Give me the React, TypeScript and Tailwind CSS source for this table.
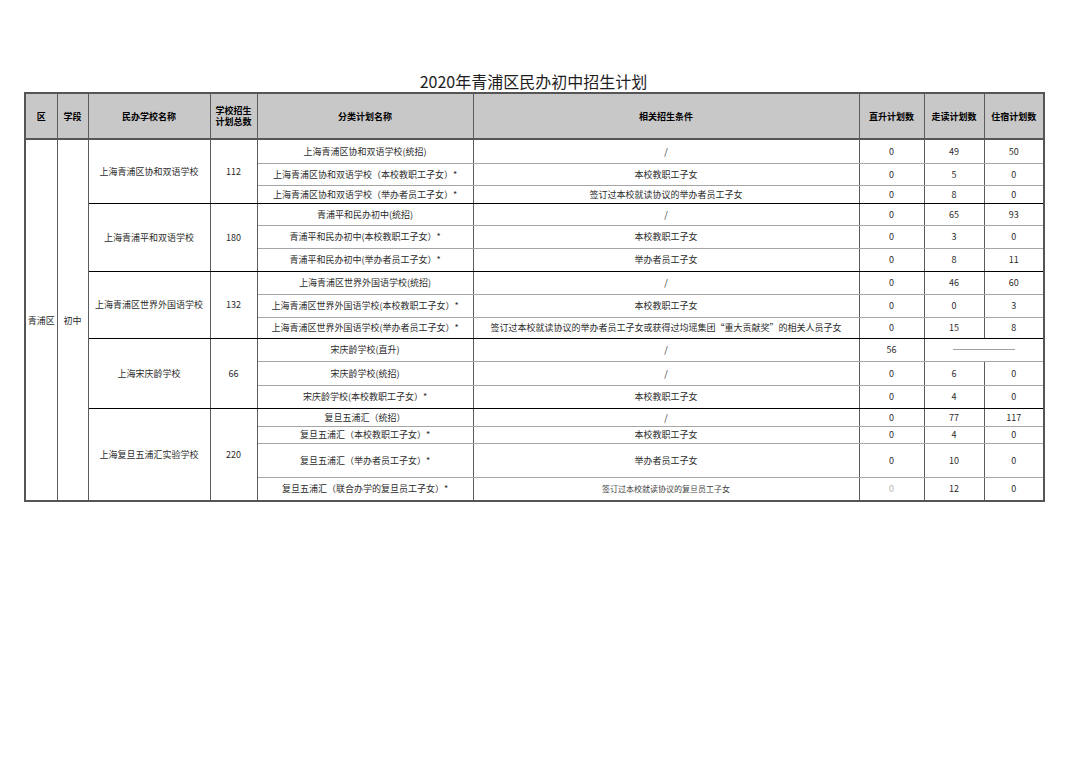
type Row = {
  name: string
  cond: string
  zs: string
  zd: string
  zz: string
  h: string
  merged?: boolean
  faint?: boolean
}

type Group = { school: string; total: string; rows: Row[] }

const groups: Group[] = [
  {
    school: '上海青浦区协和双语学校',
    total: '112',
    rows: [
      { name: '上海青浦区协和双语学校(统招)', cond: '/', zs: '0', zd: '49', zz: '50', h: 'h-[24px]' },
      { name: '上海青浦区协和双语学校（本校教职工子女）*', cond: '本校教职工子女', zs: '0', zd: '5', zz: '0', h: 'h-[22px]' },
      { name: '上海青浦区协和双语学校（举办者员工子女）*', cond: '签订过本校就读协议的举办者员工子女', zs: '0', zd: '8', zz: '0', h: 'h-[18px]' },
    ],
  },
  {
    school: '上海青浦平和双语学校',
    total: '180',
    rows: [
      { name: '青浦平和民办初中(统招)', cond: '/', zs: '0', zd: '65', zz: '93', h: 'h-[22px]' },
      { name: '青浦平和民办初中(本校教职工子女）*', cond: '本校教职工子女', zs: '0', zd: '3', zz: '0', h: 'h-[23px]' },
      { name: '青浦平和民办初中(举办者员工子女）*', cond: '举办者员工子女', zs: '0', zd: '8', zz: '11', h: 'h-[23px]' },
    ],
  },
  {
    school: '上海青浦区世界外国语学校',
    total: '132',
    rows: [
      { name: '上海青浦区世界外国语学校(统招)', cond: '/', zs: '0', zd: '46', zz: '60', h: 'h-[23px]' },
      { name: '上海青浦区世界外国语学校(本校教职工子女）*', cond: '本校教职工子女', zs: '0', zd: '0', zz: '3', h: 'h-[23px]' },
      {
        name: '上海青浦区世界外国语学校(举办者员工子女）*',
        cond: '签订过本校就读协议的举办者员工子女或获得过均瑶集团“重大贡献奖”的相关人员子女',
        zs: '0',
        zd: '15',
        zz: '8',
        h: 'h-[21px]',
      },
    ],
  },
  {
    school: '上海宋庆龄学校',
    total: '66',
    rows: [
      { name: '宋庆龄学校(直升)', cond: '/', zs: '56', zd: '', zz: '', h: 'h-[23px]', merged: true },
      { name: '宋庆龄学校(统招)', cond: '/', zs: '0', zd: '6', zz: '0', h: 'h-[24px]' },
      { name: '宋庆龄学校(本校教职工子女）*', cond: '本校教职工子女', zs: '0', zd: '4', zz: '0', h: 'h-[23px]' },
    ],
  },
  {
    school: '上海复旦五浦汇实验学校',
    total: '220',
    rows: [
      { name: '复旦五浦汇（统招）', cond: '/', zs: '0', zd: '77', zz: '117', h: 'h-[18px]' },
      { name: '复旦五浦汇（本校教职工子女）*', cond: '本校教职工子女', zs: '0', zd: '4', zz: '0', h: 'h-[17px]' },
      { name: '复旦五浦汇（举办者员工子女）*', cond: '举办者员工子女', zs: '0', zd: '10', zz: '0', h: 'h-[34px]' },
      {
        name: '复旦五浦汇（联合办学的复旦员工子女）*',
        cond: '签订过本校就读协议的复旦员工子女',
        zs: '0',
        zd: '12',
        zz: '0',
        h: 'h-[24px]',
        faint: true,
      },
    ],
  },
]

const totalRows = groups.reduce((n, g) => n + g.rows.length, 0)

// shared cell look
const td = 'border border-x-[#5c5c5c] border-y-[#a6a6a6] p-0 text-center align-middle whitespace-nowrap'
const th = 'border border-x-[#5c5c5c] border-b-2 border-b-[#555555] bg-[#c8c8c8] p-0 text-center align-middle font-bold text-black'

export default function App() {
  return (
    <div className="min-h-screen w-[1080px] bg-white pt-[71px] pl-[24px] font-['Noto_Sans_CJK_SC','Noto_Sans',sans-serif] text-[9px] text-[#2b2b2b]">
      <div className="h-[21px] w-[1019px] text-center text-[16px] leading-[21px] text-[#1e1e1e]">
        2020年青浦区民办初中招生计划
      </div>

      <table className="w-[1019px] table-fixed border-collapse border-2 border-[#555555] leading-[11px]">
        <colgroup>
          <col className="w-[32px]" />
          <col className="w-[31px]" />
          <col className="w-[122px]" />
          <col className="w-[47px]" />
          <col className="w-[216px]" />
          <col className="w-[386px]" />
          <col className="w-[65px]" />
          <col className="w-[60px]" />
          <col className="w-[60px]" />
        </colgroup>
        <thead>
          <tr className="h-[46px]">
            <th className={th}>区</th>
            <th className={th}>学段</th>
            <th className={th}>民办学校名称</th>
            <th className={th}>
              学校招生
              <br />
              计划总数
            </th>
            <th className={th}>分类计划名称</th>
            <th className={th}>相关招生条件</th>
            <th className={th}>直升计划数</th>
            <th className={th}>走读计划数</th>
            <th className={th}>住宿计划数</th>
          </tr>
        </thead>
        <tbody>
          {groups.map((g, gi) =>
            g.rows.map((r, ri) => {
              const first = ri === 0
              const last = ri === g.rows.length - 1
              const edge = `${first && gi > 0 ? 'border-t-black' : ''} ${last && gi < groups.length - 1 ? 'border-b-black' : ''}`
              return (
                <tr key={`${gi}-${ri}`} className={r.h}>
                  {gi === 0 && first && (
                    <>
                      <td rowSpan={totalRows} className={td}>
                        青浦区
                      </td>
                      <td rowSpan={totalRows} className={td}>
                        初中
                      </td>
                    </>
                  )}
                  {first && (
                    <>
                      <td
                        rowSpan={g.rows.length}
                        className={`${td} ${gi > 0 ? 'border-t-black' : ''} ${gi < groups.length - 1 ? 'border-b-black' : ''}`}
                      >
                        {g.school}
                      </td>
                      <td
                        rowSpan={g.rows.length}
                        className={`${td} ${gi > 0 ? 'border-t-black' : ''} ${gi < groups.length - 1 ? 'border-b-black' : ''}`}
                      >
                        {g.total}
                      </td>
                    </>
                  )}
                  <td className={`${td} ${edge}`}>{r.name}</td>
                  <td className={`${td} ${edge} ${r.faint ? 'text-[8px] text-[#444]' : ''}`}>{r.cond}</td>
                  <td className={`${td} ${edge} ${r.faint ? 'text-[#b5b5b5]' : ''}`}>{r.zs}</td>
                  {r.merged ? (
                    <td colSpan={2} className={`${td} ${edge}`}>
                      <div className="mx-auto h-px w-[62px] bg-[#a0a0a0]" />
                    </td>
                  ) : (
                    <>
                      <td className={`${td} ${edge}`}>{r.zd}</td>
                      <td className={`${td} ${edge}`}>{r.zz}</td>
                    </>
                  )}
                </tr>
              )
            })
          )}
        </tbody>
      </table>
    </div>
  )
}
